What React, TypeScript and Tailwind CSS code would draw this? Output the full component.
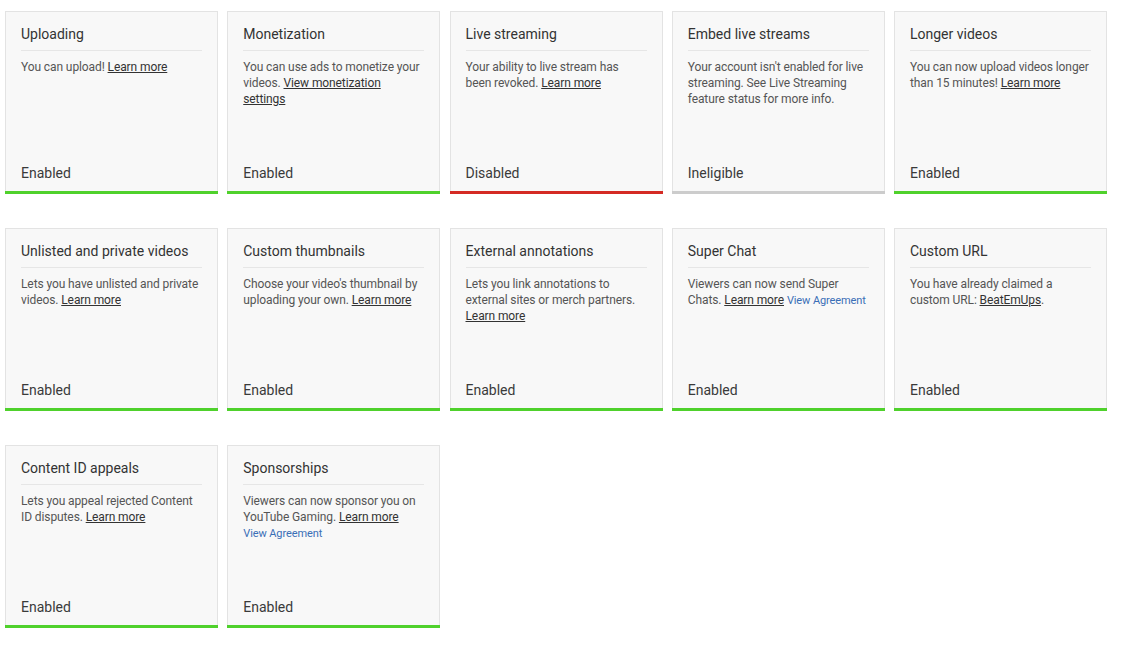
import React from 'react';

type Status = 'Enabled' | 'Disabled' | 'Ineligible';

interface Feature {
  title: string;
  body: React.ReactNode;
  status: Status;
}

const Learn: React.FC<{ children?: React.ReactNode }> = ({ children = 'Learn more' }) => (
  <a className="underline text-[#333] cursor-pointer">{children}</a>
);

const Agreement: React.FC = () => (
  <a className="text-[11px] tracking-[-0.1px] text-[#3a6fb7] cursor-pointer">View Agreement</a>
);

const features: Feature[] = [
  { title: 'Uploading', body: <>You can upload! <Learn /></>, status: 'Enabled' },
  {
    title: 'Monetization',
    body: <>You can use ads to monetize your videos. <Learn>View monetization settings</Learn></>,
    status: 'Enabled',
  },
  {
    title: 'Live streaming',
    body: <>Your ability to live stream has been revoked. <Learn /></>,
    status: 'Disabled',
  },
  {
    title: 'Embed live streams',
    body: <>Your account isn't enabled for live streaming. See Live Streaming feature status for more info.</>,
    status: 'Ineligible',
  },
  {
    title: 'Longer videos',
    body: <>You can now upload videos longer than 15 minutes! <Learn /></>,
    status: 'Enabled',
  },
  {
    title: 'Unlisted and private videos',
    body: <>Lets you have unlisted and private videos. <Learn /></>,
    status: 'Enabled',
  },
  {
    title: 'Custom thumbnails',
    body: <>Choose your video's thumbnail by uploading your own. <Learn /></>,
    status: 'Enabled',
  },
  {
    title: 'External annotations',
    body: <>Lets you link annotations to external sites or merch partners. <Learn /></>,
    status: 'Enabled',
  },
  {
    title: 'Super Chat',
    body: <>Viewers can now send Super Chats. <Learn /> <Agreement /></>,
    status: 'Enabled',
  },
  {
    title: 'Custom URL',
    body: <>You have already claimed a custom URL: <Learn>BeatEmUps</Learn>.</>,
    status: 'Enabled',
  },
  {
    title: 'Content ID appeals',
    body: <>Lets you appeal rejected Content ID disputes. <Learn /></>,
    status: 'Enabled',
  },
  {
    title: 'Sponsorships',
    body: <>Viewers can now sponsor you on YouTube Gaming. <Learn /><br /><Agreement /></>,
    status: 'Enabled',
  },
];

const barColor: Record<Status, string> = {
  Enabled: 'bg-[#4fd12c]',
  Disabled: 'bg-[#d42a24]',
  Ineligible: 'bg-[#cccccc]',
};

const FeatureCard: React.FC<{ feature: Feature }> = ({ feature }) => (
  <div className="flex flex-col h-[183px] w-[213px]">
    <div className="flex flex-col flex-1 bg-[#f8f8f8] border border-b-0 border-[#e3e3e3] pt-[12px] px-[15px] pb-[8px]">
      <h3 className="text-[14px] leading-[20px] text-[#333]">{feature.title}</h3>
      <div className="mt-[6px] h-px bg-[#e6e6e6]" />
      <p className="mt-[8px] text-[12px] leading-[16px] tracking-[-0.1px] text-[#555]">{feature.body}</p>
      <div className="flex-1" />
      <div className="text-[14px] leading-[20px] text-[#3a3a3a]">{feature.status}</div>
    </div>
    <div className={`h-[3px] ${barColor[feature.status]}`} />
  </div>
);

export default function App() {
  return (
    <div className="min-h-screen bg-white pl-[5px] pt-[11px]" style={{ fontFamily: 'Roboto, "Liberation Sans", sans-serif' }}>
      <div className="grid grid-cols-[repeat(5,213px)] gap-x-[9.25px] gap-y-[34px]">
        {features.map((f) => (
          <FeatureCard key={f.title} feature={f} />
        ))}
      </div>
    </div>
  );
}
